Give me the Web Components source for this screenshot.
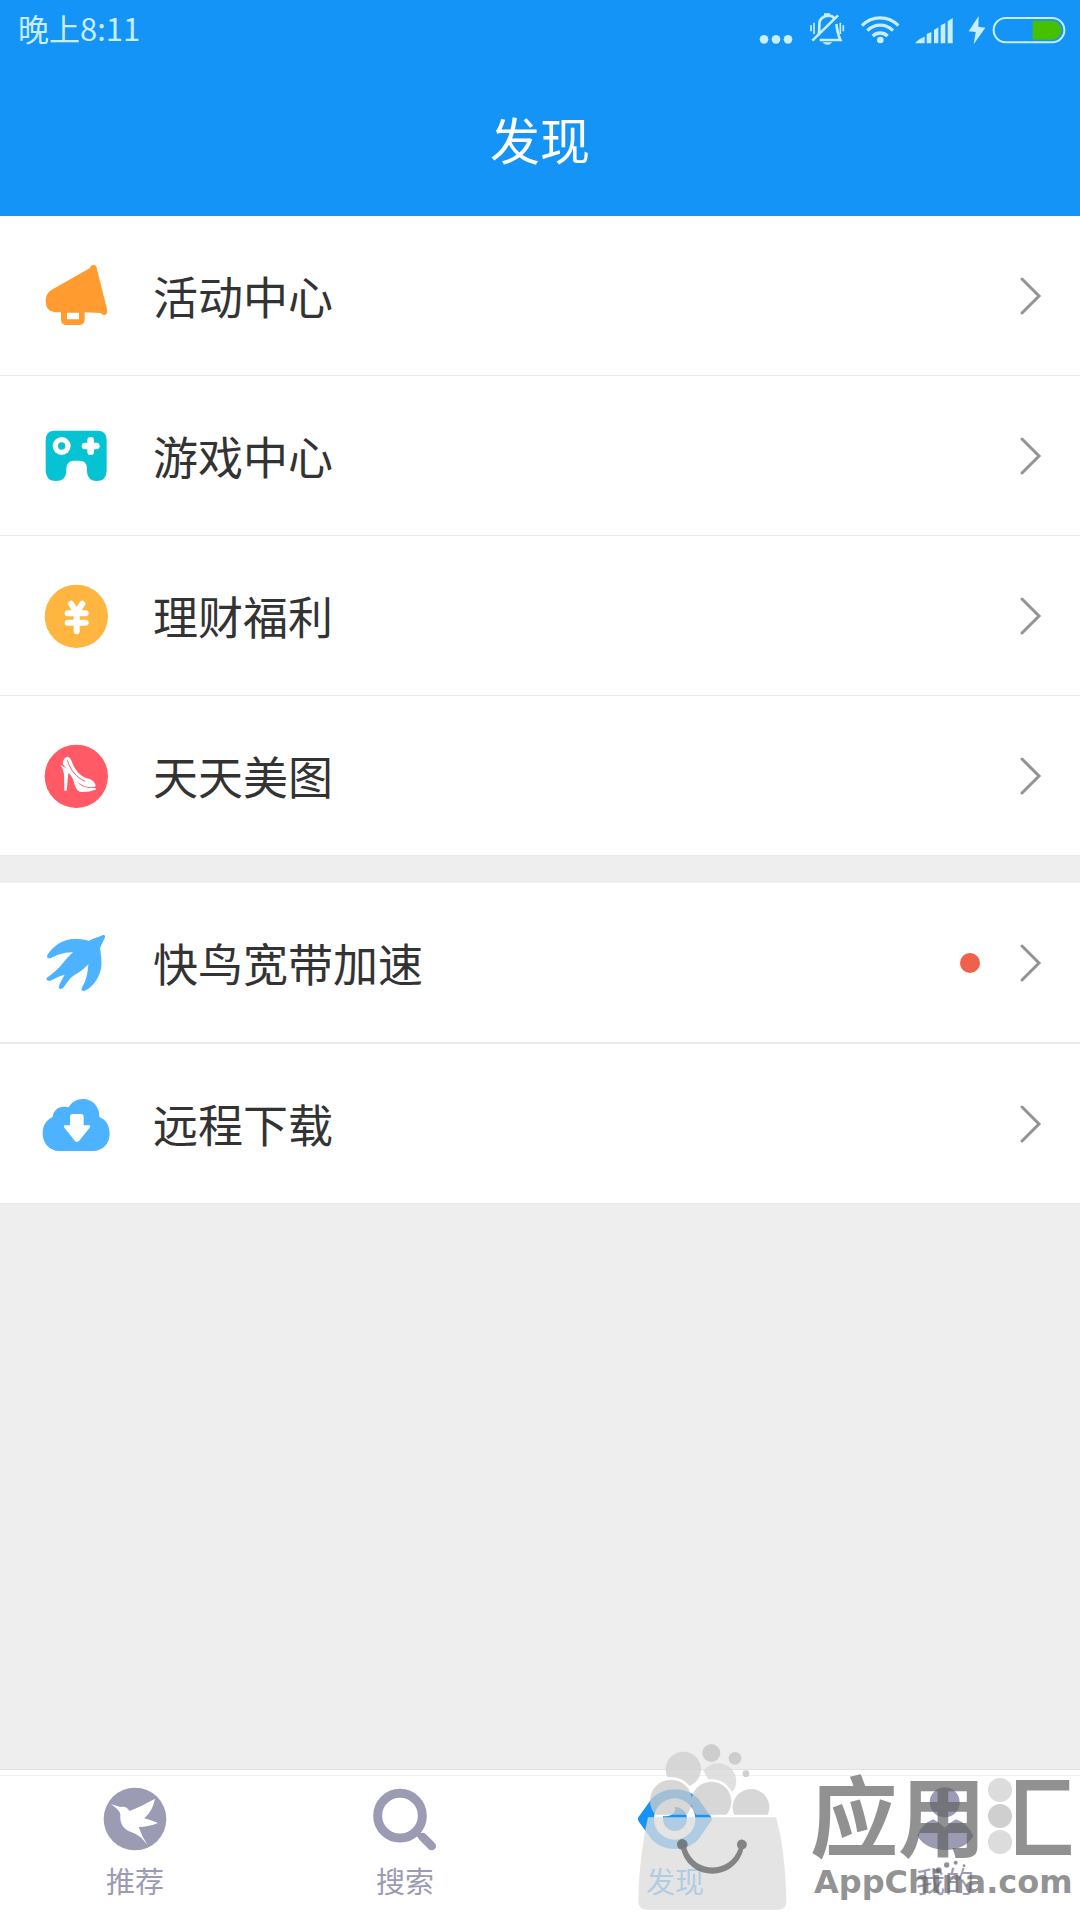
<!DOCTYPE html>
<html lang="zh-CN">
<head>
<meta charset="UTF-8">
<meta name="viewport" content="width=device-width, initial-scale=1">
<title>发现</title>
<style>
    body{
        margin:0;
        font-family:"Noto Sans CJK SC", sans-serif;
        color:#333;
        background:#eee;
    }
</style>
</head>
<body>
<discover-page>
    <status-bar slot="top">晚上8:11</status-bar>
    <page-header slot="top">发现</page-header>

    <menu-group>
        <menu-row icon="horn">活动中心</menu-row>
        <menu-row icon="gamepad">游戏中心</menu-row>
        <menu-row icon="coin">理财福利</menu-row>
        <menu-row icon="shoe">天天美图</menu-row>
    </menu-group>
    <menu-group class="thick">
        <menu-row icon="swift" dot>快鸟宽带加速</menu-row>
        <menu-row icon="cloud">远程下载</menu-row>
    </menu-group>

    <tab-bar slot="bottom">
        <tab-item icon="bird">推荐</tab-item>
        <tab-item icon="search">搜索</tab-item>
        <tab-item icon="eye" active>发现</tab-item>
        <tab-item icon="person">我的</tab-item>
    </tab-bar>
    <store-mark slot="bottom"></store-mark>
</discover-page>

<script>
// viewBox + contents of every icon
const ICONS = {
    horn: ["121 120 216 216", `
        <path fill="#ff9b2f" fill-rule="evenodd" d="M155 210L270 145Q274 133 284 135Q291 137 292 148L322 268Q325 284 315 285Q308 286 303 279L255 277V297Q255 315 238 315H201Q184 315 184 297V277H166Q138 274 138 243Q138 221 155 210ZM202 278V298H238V278Z"/>`],
    gamepad: ["121 600 216 216", `
        <path fill="#06c3d3" d="M138 660Q138 632 166 632H293Q321 632 321 660V752Q320 783 291 783Q265 783 262 757V744Q260 722 240 722H222Q203 722 200 744V757Q197 783 169 783Q139 783 138 752Z"/>
        <circle cx="186" cy="678" r="27" fill="#fff"/><circle cx="186" cy="678" r="11" fill="#06c3d3"/>
        <path d="M256 678H290M273 661V695" stroke="#fff" stroke-width="20" stroke-linecap="round"/>`],
    coin: ["121 120 216 216", `
        <circle cx="230" cy="229" r="95" fill="#ffb640"/>
        <path d="M214 191L231 218L248 191M204 220H258M204 248H258M231 218V274" fill="none" stroke="#fff" stroke-width="18" stroke-linecap="round" stroke-linejoin="round"/>`],
    shoe: ["121 600 216 216", `
        <circle cx="230" cy="709" r="95" fill="#ff5a66"/>
        <path fill="#fff" d="M189 672Q190 653 204 650Q214 653 219 672C230 698 250 714 268 716Q286 722 288 738Q286 744 265 741Q245 737 229 722L197 682Z"/>
        <path fill="#fff" d="M182 674L204 688Q222 704 232 724C242 740 262 746 288 744V749Q262 758 240 755Q230 751 225 734C220 716 214 704 206 700L201 752H194L193 702Q190 684 182 674Z"/>
        <path d="M203 661C212 690 230 712 256 724" fill="none" stroke="#ff5a66" stroke-width="3"/>`],
    swift: ["121 199 216 216", `
        <path fill="#4db2ff" d="M310 223Q319 222 315 232L301 262C305 285 307 305 304 325C298 352 280 378 260 388Q243 396 246 382C260 362 264 338 266 311C252 325 242 334 226 342C210 350 200 370 190 382Q180 390 177 379C182 364 188 354 195 342C178 346 165 354 152 360Q138 362 141 352C160 338 176 324 188 309C198 297 208 286 220 275C192 274 170 284 152 293Q139 294 143 283C158 258 190 235 224 235C242 235 258 237 268 241C278 233 298 230 310 223Z"/>`],
    cloud: ["121 684 216 216", `
        <path fill="#4db2ff" d="M179 873C149 872 129 849 129 821C129 796 139 780 159 771C162 747 181 735 207 742C216 726 231 717 250 717C280 717 300 741 299 771C319 779 330 797 330 821C330 850 310 872 280 873Z"/>
        <path fill="#fff" d="M211 770Q211 762 219 762H245Q252 762 252 770V796H268Q274 797 270 803L238 843Q232 849 226 843L194 803Q190 797 196 796H211Z"/>`],
    bird: ["116 100 216 216", `
        <circle cx="224" cy="208" r="94" fill="currentColor"/>
        <path fill="#fff" d="M151 163L180 172Q198 168 208 184Q244 170 284 147Q277 184 252 206Q270 211 293 220Q266 231 235 232Q244 260 262 287Q238 254 212 247C186 238 178 218 180 193Q177 180 151 163Z"/>`],
    search: ["927 100 216 216", `
        <circle cx="1020" cy="198" r="67" fill="none" stroke="currentColor" stroke-width="27"/>
        <path d="M1088 262L1115 289" stroke="currentColor" stroke-width="26" stroke-linecap="round"/>
        <path d="M1062 242L1084 262" stroke="currentColor" stroke-width="16"/>`],
    eye: ["57 159 216 216", `
        <path fill="currentColor" fill-rule="evenodd" d="M55 262L96 205C134 169 196 169 234 205L274 262Q277 267 274 273L234 329C196 366 134 366 96 329L55 273Q52 267 55 262ZM102 267A62 62 0 1 0 226 267A62 62 0 1 0 102 267Z"/>
        <path fill="currentColor" d="M129 267A36 36 0 1 0 164 231C172 246 152 262 129 258Z"/>`],
    person: ["867 159 216 216", `
        <circle cx="974" cy="217" r="45" fill="currentColor"/>
        <path fill="currentColor" d="M892 317Q906 280 940 268Q956 276 974 293Q990 278 1008 268Q1042 280 1060 317C1032 374 922 374 892 317Z"/>`],
    chevron: ["0 0 24 44", `
        <path d="M4 5L21 22L4 39" fill="none" stroke="#939393" stroke-width="3" stroke-linecap="round"/>`],
    // status bar
    more: ["108 36 108 108", `<circle cx="126" cy="118" r="13"/><circle cx="162" cy="118" r="13"/><circle cx="198" cy="118" r="13"/>`],
    mute: ["255 36 114 108", `
        <path d="M286 106C292 92 286 72 291 62C298 46 324 42 333 54M340 72C342 88 344 102 352 120H290M345 46L268 122" fill="none" stroke="currentColor" stroke-width="8"/>
        <path d="M298 127H328Q314 142 298 127ZM303 40H321V48H303Z"/>
        <path d="M264 76V94M273 68V102M352 68V102M361 76V94" stroke="currentColor" stroke-width="5"/>`],
    wifi: ["410 36 120 108", `
        <path d="M416 77C446 46 495 46 525 77M432 92C455 70 486 70 509 92M448 108C461 96 480 96 493 108" fill="none" stroke="currentColor" stroke-width="10"/>
        <circle cx="471" cy="120" r="10"/>`],
    signal: ["577 36 120 108", `
        <path d="M580 130Q590 116 609 110V130ZM615 102L629 96V130H615ZM637 90L650 82V130H637ZM657 76L671 69V130H657ZM678 64L693 54V130H678Z"/>`],
    bolt: ["745 36 54 108", `<path d="M777 48L747 94L768 96L762 133L797 83L776 80Z"/>`],
    battery: ["813 36 228 108", `
        <rect x="821" y="54" width="212" height="73" rx="36" fill="none" stroke="currentColor" stroke-width="6"/>
        <path fill="#45c100" d="M938 62H996C1034 66 1034 114 996 119H938Z"/>`]
};

class UiIcon extends HTMLElement{
    constructor(){
        super()
        this.attachShadow({ mode: "open" });
    }
    static get observedAttributes() {
        return ["name"];
    }
    attributeChangedCallback(attr, oldVal, newVal) {
        const [box, shapes] = ICONS[newVal];
        this.shadowRoot.innerHTML = `
            <style>
                :host{ display:block; flex:none; width:72px; height:72px; }
                svg{ display:block; width:100%; height:100%; overflow:visible; }
            </style>
            <svg viewBox="${box}" fill="currentColor" aria-hidden="true">${shapes}</svg>
        `;
    }
}

class BaseElement extends HTMLElement{
    constructor(){
        super()
        this.attachShadow({ mode: "open" });
    }
    connectedCallback(){
        const template = document.createElement("template");
        template.innerHTML = this.getStyles() + this.getTemplate();
        this.shadowRoot.replaceChildren(template.content.cloneNode(true));
    }
}

class DiscoverPage extends BaseElement{
    getTemplate(){
        return `
            <header><slot name="top"></slot></header>
            <main><slot></slot></main>
            <footer><slot name="bottom"></slot></footer>
        `;
    }
    getStyles(){
        return `
          <style>
            :host{
                display:flex;
                flex-direction:column;
                min-height:100vh;
            }
            header{
                background:#1494f6;
                color:#fff;
            }
            main{
                flex:1;
                display:flex;
                flex-direction:column;
                gap:27px;
            }
            footer{
                position:relative;
            }
          </style>
        `;
    }
}

class StatusBar extends BaseElement{
    getTemplate(){
        return `
            <time><slot></slot></time>
            <div class="icons">
                <ui-icon name="more"></ui-icon>
                <ui-icon name="mute" class="mid"></ui-icon>
                <ui-icon name="wifi" class="wide"></ui-icon>
                <ui-icon name="signal" class="wide"></ui-icon>
                <div class="power">
                    <ui-icon name="bolt" class="thin"></ui-icon>
                    <ui-icon name="battery" class="long"></ui-icon>
                </div>
            </div>
        `;
    }
    getStyles(){
        return `
          <style>
            :host{
                display:flex;
                align-items:flex-start;
                justify-content:space-between;
                height:48px;
                padding:12px 13px 0 18px;
                color:#c9eeff;
                font-size:31px;
                line-height:36px;
            }
            .icons{
                display:flex;
                gap:14px;
            }
            .power{
                display:flex;
                gap:5px;
            }
            ui-icon{ width:36px; height:36px; }
            .mid{ width:38px; }
            .wide{ width:40px; }
            .thin{ width:18px; }
            .long{ width:76px; }
            time{ margin-top:-2px; }
          </style>
        `;
    }
}

class PageHeader extends BaseElement{
    getTemplate(){
        return `<h1><slot></slot></h1>`;
    }
    getStyles(){
        return `
          <style>
            :host{ display:block; }
            h1{
                margin:0;
                padding:48px 0;
                font-size:50px;
                line-height:60px;
                font-weight:400;
                text-align:center;
            }
          </style>
        `;
    }
}

class MenuGroup extends BaseElement{
    getTemplate(){
        return `<nav><slot></slot></nav>`;
    }
    getStyles(){
        return `
          <style>
            :host{ display:block; --line:1px; }
            :host(.thick){ --line:2px; }
            nav{
                display:flex;
                flex-direction:column;
                gap:var(--line);
                padding-bottom:1px;
                background:#eaeaea;
            }
          </style>
        `;
    }
}

class MenuRow extends BaseElement{
    getTemplate(){
        return `
            <a href="#">
                <ui-icon name="${this.getAttribute("icon")}"></ui-icon>
                <span class="label"><slot></slot></span>
                ${this.hasAttribute("dot") ? `<span class="dot"></span>` : ""}
                <ui-icon name="chevron" class="chevron"></ui-icon>
            </a>
        `;
    }
    getStyles(){
        return `
          <style>
            :host{ display:block; background:#fff; }
            a{
                display:flex;
                align-items:center;
                min-height:159px;
                padding:0 38px 0 40px;
                color:inherit;
                text-decoration:none;
            }
            .label{
                flex:1;
                padding-left:41px;
                font-size:45px;
                line-height:60px;
            }
            .dot{
                width:20px;
                height:20px;
                margin-right:38px;
                border-radius:50%;
                background:#f0604a;
            }
            .chevron{ width:24px; height:44px; }
          </style>
        `;
    }
}

class TabBar extends BaseElement{
    getTemplate(){
        return `<nav><slot></slot></nav>`;
    }
    getStyles(){
        return `
          <style>
            :host{
                display:block;
                padding-top:5px;
                border-top:1px solid #e2e2e2;
                background:#fff;
            }
            nav{
                display:flex;
                height:144px;
                border-top:1px solid #f0f0f0;
            }
          </style>
        `;
    }
}

class TabItem extends BaseElement{
    getTemplate(){
        return `
            <a href="#">
                <ui-icon name="${this.getAttribute("icon")}"></ui-icon>
                <span><slot></slot></span>
            </a>
        `;
    }
    getStyles(){
        return `
          <style>
            :host{
                flex:1;
                display:block;
                color:#9c9bb4;
            }
            :host([active]){ color:#1494f6; }
            a{
                display:flex;
                flex-direction:column;
                align-items:center;
                gap:5px;
                padding-top:7px;
                color:inherit;
                text-decoration:none;
            }
            span{
                font-size:29px;
                line-height:40px;
            }
          </style>
        `;
    }
}

// translucent store logo lying over the tab bar
class StoreMark extends BaseElement{
    getTemplate(){
        return `
            <svg class="bag" viewBox="0 0 570 570" aria-hidden="true">
                <defs>
                    <mask id="back">
                        <rect width="570" height="570" fill="#fff"/>
                        <circle cx="153" cy="212" r="71"/>
                        <circle cx="274" cy="215" r="68"/>
                    </mask>
                    <clipPath id="above"><rect width="570" height="254"/></clipPath>
                </defs>
                <g mask="url(#back)" fill="#d0d0d0" fill-opacity=".8">
                    <circle cx="190" cy="118" r="53"/>
                    <path d="M250 124A49 49 0 0 1 340 182L300 200Z" fill="#d8d8d8"/>
                </g>
                <g clip-path="url(#above)" fill="#ccc" fill-opacity=".78">
                    <circle cx="153" cy="212" r="63"/>
                    <circle cx="274" cy="215" r="60"/>
                    <circle cx="393" cy="232" r="55"/>
                </g>
                <g fill="#c4c4c4" fill-opacity=".8">
                    <circle cx="274" cy="69" r="27"/>
                    <circle cx="345" cy="85" r="19"/>
                    <circle cx="378" cy="131" r="10"/>
                </g>
                <path fill="#dcdcdc" fill-opacity=".78" d="M84 262H468C488 330 497 420 499 515Q498 538 475 539H80Q56 538 55 515C56 430 66 340 84 262Z"/>
                <path fill="#505050" fill-opacity=".65" d="M171 343A16 16 0 1 1 199 354C224 432 330 432 356 355A15 15 0 1 1 370 358C345 455 210 455 184 359A16 16 0 0 1 171 343Z"/>
            </svg>
            <div class="words">
                <div class="name"><span>应用</span><span class="hui">汇</span>
                    <svg class="drops" viewBox="0 0 24 80" aria-hidden="true">
                        <circle cx="12" cy="14" r="12" fill="#dcdcdc"/>
                        <circle cx="12" cy="40" r="12" fill="#cfcfcf"/>
                        <circle cx="12" cy="66" r="12" fill="#dcdcdc"/>
                    </svg>
                </div>
                <div class="site">AppChina.com
                    <svg class="arc" viewBox="945 380 96 48" aria-hidden="true">
                        <circle cx="956" cy="414" r="9"/><circle cx="980" cy="398" r="8"/><circle cx="1007" cy="391" r="6"/><circle cx="1032" cy="400" r="4"/>
                    </svg>
                </div>
            </div>
        `;
    }
    getStyles(){
        return `
          <style>
            :host{
                position:absolute;
                right:0;
                bottom:0;
                display:flex;
                align-items:flex-end;
                pointer-events:none;
                color:rgba(98,98,98,.7);
            }
            .bag{
                width:190px;
                height:190px;
            }
            .words{
                width:270px;
                padding-bottom:20px;
            }
            .name, .site{
                position:relative;
                white-space:nowrap;
            }
            .name{
                margin-bottom:8px;
                font-size:88px;
                line-height:88px;
                font-weight:700;
            }
            /* the left dots of the last character are drawn by .drops */
            .hui{
                background:linear-gradient(90deg, transparent 34%, rgba(98,98,98,.7) 34%);
                -webkit-background-clip:text;
                background-clip:text;
                color:transparent;
            }
            .drops{
                position:absolute;
                left:178px;
                top:8px;
                width:24px;
                height:80px;
            }
            .site{
                padding-left:4px;
                font-family:"DejaVu Sans", sans-serif;
                font-size:32px;
                line-height:36px;
                font-weight:700;
            }
            .arc{
                position:absolute;
                left:125px;
                top:-5px;
                width:32px;
                height:16px;
                fill:rgba(98,98,98,.7);
            }
          </style>
        `;
    }
}

customElements.define("ui-icon", UiIcon);
customElements.define("discover-page", DiscoverPage);
customElements.define("status-bar", StatusBar);
customElements.define("page-header", PageHeader);
customElements.define("menu-group", MenuGroup);
customElements.define("menu-row", MenuRow);
customElements.define("tab-bar", TabBar);
customElements.define("tab-item", TabItem);
customElements.define("store-mark", StoreMark);
</script>
</body>
</html>
